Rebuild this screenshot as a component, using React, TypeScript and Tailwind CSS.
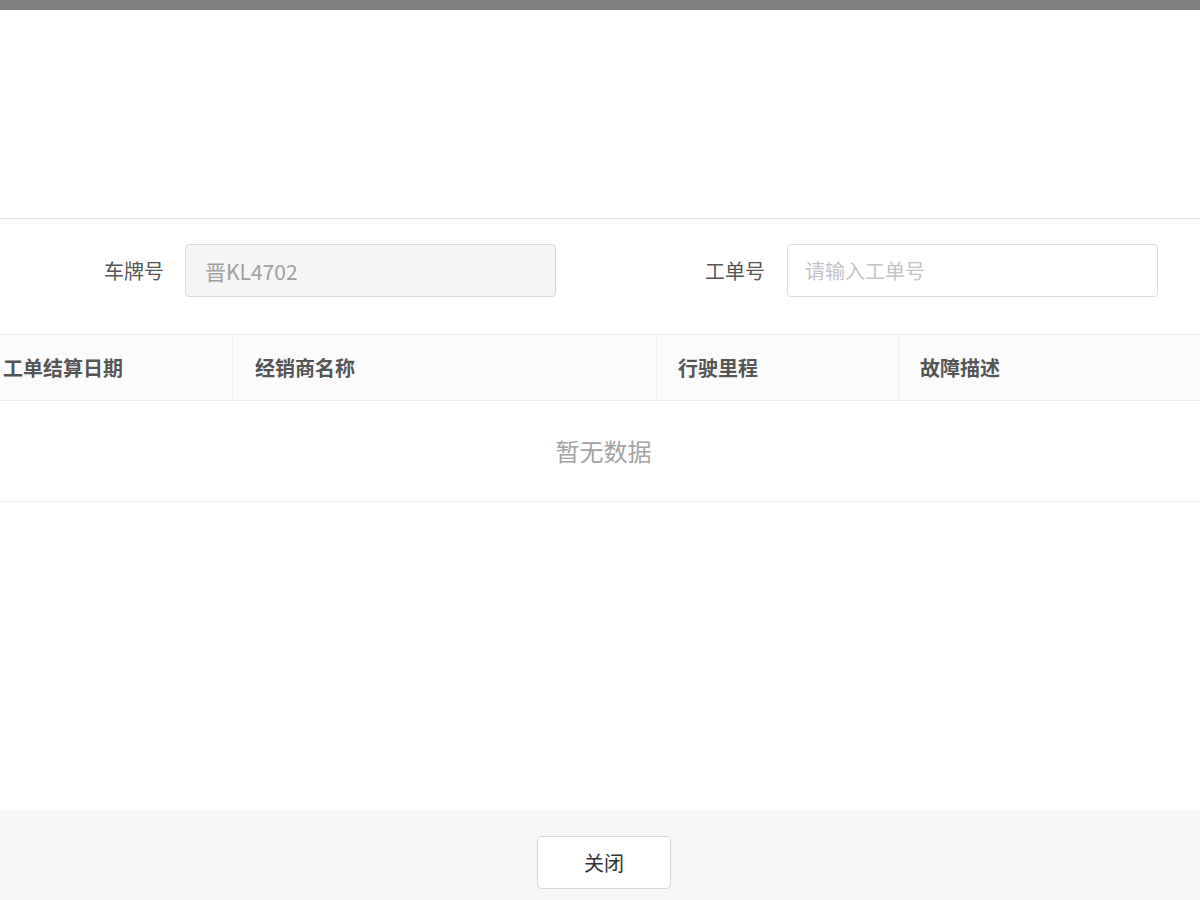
import React from "react"

const columns = [
  { title: "工单结算日期", width: "w-[233px]", pad: "pl-[3px]" },
  { title: "经销商名称", width: "w-[424px]", pad: "pl-[22px]" },
  { title: "行驶里程", width: "w-[242px]", pad: "pl-[21px]" },
  { title: "故障描述", width: "flex-1", pad: "pl-[21px]" },
]

export default function App() {
  return (
    <div
      className="flex h-[900px] w-[1200px] flex-col overflow-hidden bg-white text-[#555]"
      style={{ fontFamily: '"Noto Sans CJK SC", "Liberation Sans", sans-serif' }}
    >
      {/* top bar */}
      <div className="h-[10px] bg-[#7f7f7f]" />
      <div className="h-[209px] border-b border-[#e2e2e2]" />

      {/* search form */}
      <div className="flex items-center pt-[25px]">
        <div className="w-[164px] text-right text-[20px] text-[#555]">车牌号</div>
        <input
          disabled
          value="晋KL4702"
          readOnly
          className="ml-[21px] h-[53px] w-[371px] rounded-[4px] border border-[#d9d9d9] bg-[#f5f5f5] px-[19px] text-[21px] text-[#a0a0a0]"
        />
        <div className="w-[209px] text-right text-[20px] text-[#555]">工单号</div>
        <input
          placeholder="请输入工单号"
          className="ml-[22px] h-[53px] w-[371px] rounded-[4px] border border-[#dcdcdc] bg-white px-[17px] text-[20px] text-[#555] placeholder:text-[#c4c4c4]"
        />
      </div>

      {/* table */}
      <div className="mt-[37px] border-t border-[#ebebeb]">
        <div className="flex h-[66px] border-b border-[#ebebeb] bg-[#fbfbfb]">
          {columns.map((col, i) => (
            <div
              key={col.title}
              className={`${col.width} ${col.pad} flex items-center text-[20px] font-bold text-[#555] ${
                i < columns.length - 1 ? "border-r border-[#efefef]" : ""
              }`}
            >
              {col.title}
            </div>
          ))}
        </div>
        <div className="flex h-[101px] items-center justify-center border-b border-[#ebebeb] pl-[7px] text-[24px] text-[#a3a3a3]">
          暂无数据
        </div>
      </div>

      <div className="flex-1" />

      {/* footer */}
      <div className="flex h-[90px] justify-center bg-[#f7f7f7] pl-[8px] pt-[26px]">
        <button
          type="button"
          className="h-[53px] w-[134px] rounded-[5px] border border-[#d6d6d6] bg-white text-[20px] text-[#333]"
        >
          关闭
        </button>
      </div>
    </div>
  )
}
